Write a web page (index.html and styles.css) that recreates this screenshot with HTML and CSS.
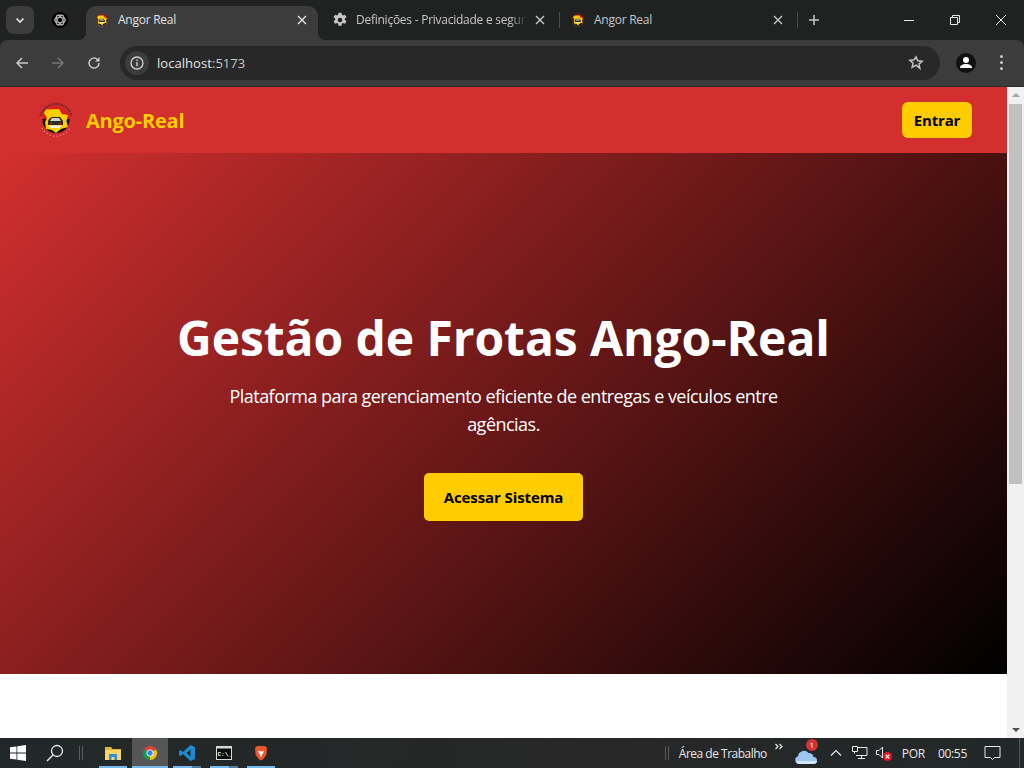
FILE: index.html
```html
<!DOCTYPE html>
<html lang="pt">
<head>
<meta charset="utf-8">
<title>Angor Real</title>
<link rel="stylesheet" href="styles.css">
</head>
<body>
<svg class="defs" width="0" height="0" aria-hidden="true">
  <defs>
    <symbol id="logo" viewBox="0 0 40 40">
      <path d="M4.500 16A16 16 0 0 1 35.500 16" fill="none" stroke="#7c2028" stroke-width="2.400" stroke-dasharray="1.600 1"/>
      <path d="M6 28A16 16 0 0 0 34 28" fill="none" stroke="#f2a8a8" stroke-width="1.200" stroke-dasharray="1 2.500"/>
      <circle cx="20" cy="20" r="13.500" fill="#e01a1a"/>
      <path d="M6.500 19h27a13.500 13.500 0 0 1-27 1z" fill="#0c0c0c"/>
      <path d="M10 9.500L23 9l3 5 6 1-1.500 6 1.500 6-7 2-5 4-4-3-6-1-1-7 2-4-3-5z" fill="#f6d000"/>
      <path d="M13 19l3-2h8l3 4v4H12v-4z" fill="#2a2a2a"/>
      <path d="M16 18h7l2 3H14z" fill="#cfcfcf"/>
      <path d="M12 25.500h14l-3 2.500h-8z" fill="#eeeeee"/>
      <circle cx="15" cy="23.500" r="1.200" fill="#b01818"/>
      <circle cx="24" cy="23.500" r="1.200" fill="#b01818"/>
    </symbol>
  </defs>
</svg>

<div class="tabstrip">
  <div class="tabsearch">
    <svg class="ico12" viewBox="0 0 12 12"><path d="M2.500 4.500L6 8l3.500-3.500" fill="none" stroke="#e3e3e3" stroke-width="1.700"/></svg>
  </div>
  <div class="pinned">
    <svg class="ico16" viewBox="0 0 16 16"><circle cx="8" cy="8" r="8" fill="#000"/><g fill="none" stroke="#bbb" stroke-width=".9"><circle cx="8" cy="8" r="5"/><ellipse cx="8" cy="8" rx="5.500" ry="2.600"/><ellipse cx="8" cy="8" rx="5.500" ry="2.600" transform="rotate(60 8 8)"/><ellipse cx="8" cy="8" rx="5.500" ry="2.600" transform="rotate(120 8 8)"/></g></svg>
  </div>
  <div class="tab tab-active">
    <svg class="ico16"><use href="#logo"/></svg>
    <span class="tabtitle">Angor Real</span>
    <svg class="tabclose" viewBox="0 0 10 10"><path d="M1 1l8 8M9 1l-8 8" stroke="#e3e3e3" stroke-width="1.400"/></svg>
  </div>
  <div class="tab tab-settings">
    <svg class="ico16" viewBox="0 0 24 24"><path fill="#c7c7c7" fill-rule="evenodd" d="M14.200 1l.6 3.300c.6.2 1.100.5 1.600.9l3.100-1.200 2.200 3.800-2.600 2.100c.1.600.1 1.200 0 1.800l2.600 2.100-2.200 3.800-3.100-1.200c-.5.400-1 .7-1.600.9l-.6 3.300H9.800l-.6-3.300c-.6-.2-1.100-.5-1.600-.9l-3.100 1.200-2.200-3.800 2.600-2.100c-.1-.6-.1-1.200 0-1.800L2.300 7.800l2.200-3.800 3.100 1.200c.5-.4 1-.7 1.600-.9L9.800 1zM12 8.500a3.500 3.500 0 1 0 0 7 3.500 3.500 0 0 0 0-7z"/></svg>
    <span class="tabtitle tabfade">Definições - Privacidade e segurança</span>
    <svg class="tabclose" viewBox="0 0 10 10"><path d="M1 1l8 8M9 1l-8 8" stroke="#c7c7c7" stroke-width="1.400"/></svg>
  </div>
  <span class="tabsep"></span>
  <div class="tab tab-third">
    <svg class="ico16"><use href="#logo"/></svg>
    <span class="tabtitle">Angor Real</span>
    <svg class="tabclose" viewBox="0 0 10 10"><path d="M1 1l8 8M9 1l-8 8" stroke="#c7c7c7" stroke-width="1.400"/></svg>
  </div>
  <span class="tabsep"></span>
  <div class="newtab">
    <svg class="ico12" viewBox="0 0 12 12"><path d="M6 1v10M1 6h10" stroke="#c7c7c7" stroke-width="1.500"/></svg>
  </div>
  <div class="winctrls">
    <div class="winbtn"><svg class="ico10" viewBox="0 0 10 10"><path d="M0 5.500h10" stroke="#e8e8e8" stroke-width="1"/></svg></div>
    <div class="winbtn"><svg class="ico10" viewBox="0 0 10 10"><path d="M.5 2.500h7v7h-7zM2.500 2.500v-2h7v7h-2" fill="none" stroke="#e8e8e8" stroke-width="1"/></svg></div>
    <div class="winbtn"><svg class="ico10" viewBox="0 0 10 10"><path d="M0 0l10 10M10 0L0 10" stroke="#e8e8e8" stroke-width="1"/></svg></div>
  </div>
</div>

<div class="toolbar">
  <div class="navbtn"><svg class="ico16" viewBox="0 0 16 16"><path d="M14 8H3M8 3L3 8l5 5" fill="none" stroke="#c7c7c7" stroke-width="1.500"/></svg></div>
  <div class="navbtn"><svg class="ico16" viewBox="0 0 16 16"><path d="M2 8h11M8 3l5 5-5 5" fill="none" stroke="#747474" stroke-width="1.500"/></svg></div>
  <div class="navbtn"><svg class="ico16" viewBox="0 0 16 16"><path d="M13 8a5 5 0 1 1-1.500-3.500L13 6" fill="none" stroke="#c7c7c7" stroke-width="1.500"/><path d="M13.500 2v4.500H9z" fill="#c7c7c7"/></svg></div>
  <div class="omnibox">
    <div class="siteinfo"><svg class="ico16" viewBox="0 0 16 16"><circle cx="8" cy="8" r="6" fill="none" stroke="#d0d0d0" stroke-width="1.300"/><path d="M8 7v4.200M8 4.600v1.300" stroke="#d0d0d0" stroke-width="1.400"/></svg></div>
    <span class="url">localhost<span class="urlport">:5173</span></span>
    <svg class="star" viewBox="0 0 16 16"><path d="M8 1.800l1.800 4 4.400.4-3.300 2.900 1 4.300L8 10.200l-3.900 2.200 1-4.300-3.300-2.900 4.400-.4z" fill="none" stroke="#c7c7c7" stroke-width="1.400"/></svg>
  </div>
  <div class="profile"><svg class="ico20" viewBox="0 0 20 20"><circle cx="10" cy="10" r="10" fill="#111"/><circle cx="10" cy="7" r="3" fill="#fff"/><path d="M4 15c0-3 3-4 6-4s6 1 6 4z" fill="#fff"/></svg></div>
  <div class="menu"><span class="dot"></span><span class="dot"></span><span class="dot"></span></div>
</div>

<div class="viewport">
  <main class="page">
    <header class="sitebar">
      <div class="brand">
        <svg class="brandlogo"><use href="#logo"/></svg>
        <span class="brandname">Ango-Real</span>
      </div>
      <button class="btn btn-nav">Entrar</button>
    </header>
    <section class="hero">
      <h1 class="hero-title">Gestão de Frotas Ango-Real</h1>
      <p class="hero-sub">Plataforma para gerenciamento eficiente de entregas e veículos entre agências.</p>
      <button class="btn btn-hero">Acessar Sistema</button>
    </section>
    <div class="blank"></div>
  </main>
  <div class="scrollbar">
    <span class="arrow-up"></span>
    <div class="thumb"></div>
    <span class="arrow-down"></span>
  </div>
</div>

<footer class="taskbar">
  <svg class="startlogo" viewBox="0 0 16 16"><path fill="#fff" d="M0 2.300l6.500-.9v6.200H0zM7.300 1.300L16 0v7.600H7.300zM0 8.400h6.500v6.200L0 13.700zM7.300 8.400H16V16l-8.700-1.200z"/></svg>
  <svg class="tasksearch" viewBox="0 0 18 18"><circle cx="11" cy="7" r="5.500" fill="none" stroke="#e8e8e8" stroke-width="1.300"/><path d="M7 11l-6 6" stroke="#e8e8e8" stroke-width="1.500"/></svg>
  <span class="grip grip-left"></span>
  <div class="apps">
    <div class="app">
      <svg class="ico16app" viewBox="0 0 16 16"><path d="M0 2h6l1.500 2H16v3H0z" fill="#e8b33c"/><path d="M0 5h16v10H0z" fill="#fbd568"/><path d="M4 15V9h8v6h-2.500v-3h-3v3z" fill="#2f8fd8"/></svg>
    </div>
    <div class="app app-active">
      <svg class="ico16app" viewBox="0 0 48 48"><path d="M5.800 13.500a21 21 0 0 1 36.400 0L24 24z" fill="#db4437"/><path d="M42.200 13.500A21 21 0 0 1 24 45L24 24z" fill="#f4c20d"/><path d="M24 45A21 21 0 0 1 5.800 13.500L24 24z" fill="#0f9d58"/><circle cx="24" cy="24" r="10.500" fill="#fff"/><circle cx="24" cy="24" r="8" fill="#3f7fea"/></svg>
    </div>
    <div class="app app-split">
      <svg class="ico16app" viewBox="0 0 16 16"><path d="M11.500 0L16 2v12l-4.500 2L4 9l-2.500 2L0 10V6l1.500-1L4 7zM11.500 4.500L7.500 8l4 3.500z" fill="#1f8ad2"/></svg>
    </div>
    <div class="app app-split">
      <svg class="ico16app" viewBox="0 0 16 16"><path d="M0 1h16v14H0z" fill="#d8d8d8"/><path d="M1 3.500h14V14H1z" fill="#0c0c0c"/><text class="cmdtext" x="1.500" y="11">C:\_</text></svg>
    </div>
    <div class="app">
      <svg class="ico16app" viewBox="0 0 16 16"><path d="M4 1h8l2 2-.7 7-3 4L8 15.500 5.700 14l-3-4L2 3z" fill="#f1562b"/><path d="M5 5.500l2 1 1-.5 1 .5 2-1-1 3-1 1v1.500l-1 .8-1-.8V9.500l-1-1z" fill="#fff"/></svg>
    </div>
  </div>
  <div class="tray">
    <span class="grip"></span>
    <span class="traylabel">Área de Trabalho</span>
    <svg class="chev2" viewBox="0 0 8 8"><path d="M.5 1l2.500 2.500L.5 6M4.500 1L7 3.500 4.500 6" fill="none" stroke="#e8e8e8" stroke-width="1.200"/></svg>
    <div class="weather">
      <svg class="cloud" viewBox="0 0 24 20"><path d="M5 19a4 4 0 0 1-1-7.800A6 6 0 0 1 14.500 8a4.500 4.500 0 0 1 5 4 3.500 3.500 0 0 1 0 7z" fill="#9cc6f0"/><path d="M2 16h21a3.500 3.500 0 0 1-3.500 3H5a4 4 0 0 1-3-3z" fill="#d5e6f7"/></svg>
      <span class="badge">1</span>
    </div>
    <svg class="trayup" viewBox="0 0 12 8"><path d="M1 6.500l5-5 5 5" fill="none" stroke="#e8e8e8" stroke-width="1.200"/></svg>
    <svg class="network" viewBox="0 0 16 16"><path d="M4 2.500h11v8H4M9.500 10.500v3M6 13.500h7" fill="none" stroke="#e8e8e8"/><path d="M.5 1.500h5v5h-5zM2.500 6.500v2" fill="#222" stroke="#e8e8e8"/></svg>
    <svg class="volume" viewBox="0 0 16 16"><path d="M.5 5.500h2.500L6.500 2v11L3 9.500H.5z" fill="none" stroke="#e8e8e8"/><circle cx="11.500" cy="11.500" r="4.500" fill="#e81123"/><path d="M9.700 9.700l3.600 3.600M13.300 9.700l-3.600 3.600" stroke="#fff" stroke-width="1.200"/></svg>
    <span class="traytext traylang">POR</span>
    <span class="traytext trayclock">00:55</span>
    <svg class="notif" viewBox="0 0 16 16"><path d="M.5 1.500h15v11H10l-2 2-2-2H.5z" fill="none" stroke="#e8e8e8"/></svg>
    <span class="showdesk"></span>
  </div>
</footer>
</body>
</html>
```

FILE: styles.css
```css
* { box-sizing: border-box; }
html, body { margin: 0; padding: 0; height: 100%; overflow: hidden; }
body {
  width: 1024px;
  height: 768px;
  display: flex;
  flex-direction: column;
  font-family: "Open Sans", "Noto Sans", "Liberation Sans", sans-serif;
  background: #202222;
}
.defs { position: absolute; }
.ico10 { width: 10px; height: 10px; display: block; }
.ico12 { width: 12px; height: 12px; display: block; }
.ico16 { width: 16px; height: 16px; display: block; flex: none; }
.ico20 { width: 20px; height: 20px; display: block; }

/* tab strip */
.tabstrip {
  height: 40px;
  flex: none;
  display: flex;
  align-items: flex-end;
  background: #202222;
  color: #c7c7c7;
  font-size: 12px;
}
.tabsearch {
  width: 28px;
  height: 28px;
  margin: 0 0 6px 6px;
  border-radius: 8px;
  background: #3c3c3c;
  display: flex;
  align-items: center;
  justify-content: center;
}
.pinned {
  width: 16px;
  height: 34px;
  margin-left: 18px;
  padding-bottom: 6px;
  display: flex;
  align-items: center;
}
.tab {
  height: 34px;
  padding-bottom: 6px;
  display: flex;
  align-items: center;
  flex: none;
}
.tabtitle { white-space: nowrap; overflow: hidden; letter-spacing: -.25px; flex: 1; margin-left: 8px; line-height: 16px; }
.tabclose { width: 10px; height: 10px; flex: none; }
.tab-active {
  width: 232px;
  margin-left: 18px;
  padding: 0 11px 6px 8px;
  background: #3c3c3c;
  border-radius: 10px 10px 0 0;
  color: #e3e3e3;
  position: relative;
}
.tab-active::before, .tab-active::after {
  content: "";
  position: absolute;
  bottom: 0;
  width: 8px;
  height: 8px;
}
.tab-active::before { left: -8px; background: radial-gradient(circle at 0 0, transparent 8px, #3c3c3c 8.5px); }
.tab-active::after { right: -8px; background: radial-gradient(circle at 100% 0, transparent 8px, #3c3c3c 8.5px); }
.tab-settings {
  width: 227px;
  margin-left: 14px;
  padding-right: 14px;
}
.tabfade {
  flex: none;
  width: 171px;
  margin-right: 8px;
  -webkit-mask-image: linear-gradient(90deg, #000 90%, transparent);
  mask-image: linear-gradient(90deg, #000 90%, transparent);
}
.tab-third {
  width: 227px;
  margin-left: 10px;
  padding-right: 14px;
}
.tabsep {
  width: 1px;
  height: 16px;
  background: #4c4c4c;
  flex: none;
  margin-bottom: 12px;
}
.newtab {
  width: 12px;
  height: 34px;
  margin-left: 10px;
  padding-bottom: 6px;
  display: flex;
  align-items: center;
  justify-content: center;
}
.winctrls {
  margin-left: auto;
  height: 40px;
  display: flex;
}
.winbtn {
  width: 46px;
  height: 40px;
  display: flex;
  align-items: center;
  justify-content: center;
}

/* toolbar */
.toolbar {
  height: 47px;
  flex: none;
  display: flex;
  align-items: center;
  background: #3c3c3c;
  border-radius: 8px 8px 0 0;
  border-bottom: 1px solid #2c2c2c;
  padding: 0 0 1px 14px;
}
.navbtn {
  width: 36px;
  height: 34px;
  display: flex;
  align-items: center;
}
.omnibox {
  width: 820px;
  height: 34px;
  margin-left: -2px;
  background: #282828;
  border-radius: 17px;
  display: flex;
  align-items: center;
  padding: 0 16px 0 5px;
}
.siteinfo {
  width: 24px;
  height: 24px;
  border-radius: 50%;
  background: #3c3c3c;
  display: flex;
  align-items: center;
  justify-content: center;
}
.url {
  margin-left: 8px;
  flex: 1;
  font-size: 13px;
  letter-spacing: .05px;
  color: #e3e3e3;
}
.urlport { color: #c7c7c7; }
.star { width: 16px; height: 16px; flex: none; }
.profile { margin-left: 16px; width: 20px; height: 20px; }
.menu {
  margin-left: 24px;
  width: 4px;
  display: flex;
  flex-direction: column;
  gap: 3px;
}
.dot { width: 3px; height: 3px; border-radius: 50%; background: #c7c7c7; display: block; }

/* page */
.viewport {
  flex: 1;
  display: flex;
  min-height: 0;
  background: #fff;
}
.page {
  flex: 1;
  display: flex;
  flex-direction: column;
  min-width: 0;
  background: #fff;
}
.sitebar {
  height: 66px;
  flex: none;
  background: #d32f2f;
  display: flex;
  align-items: center;
  justify-content: space-between;
  padding: 0 35px 0 36px;
}
.brand { display: flex; align-items: center; gap: 10px; }
.brandlogo { width: 40px; height: 40px; display: block; }
.brandname {
  font-size: 20px;
  font-weight: 700;
  color: #ffcc00;
  letter-spacing: -.22px;
}
.btn {
  border: 0;
  background: #ffcc00;
  color: #000;
  font-family: inherit;
  font-weight: 700;
  padding: 0;
}
.btn-nav {
  width: 70px;
  height: 36px;
  border-radius: 6px;
  font-size: 15px;
  letter-spacing: -.15px;
}
.hero {
  height: 521px;
  flex: none;
  background: linear-gradient(135deg, #d32f2f, #000);
  color: #fff;
  display: flex;
  flex-direction: column;
  align-items: center;
  justify-content: center;
  text-align: center;
}
.hero-title {
  margin: 0 0 12px;
  font-size: 48px;
  line-height: 64px;
  font-weight: 700;
  letter-spacing: -.08px;
}
.hero-sub {
  margin: 0 0 35px;
  width: 600px;
  font-size: 18px;
  line-height: 28px;
  letter-spacing: -.52px;
}
.btn-hero {
  width: 159px;
  height: 48px;
  border-radius: 5px;
  font-size: 15px;
  letter-spacing: -.1px;
}
.blank { flex: 1; }

/* scrollbar */
.scrollbar {
  width: 17px;
  flex: none;
  background: #f1f1f1;
  display: flex;
  flex-direction: column;
  align-items: center;
  padding: 6px 0 6px;
}
.arrow-up, .arrow-down {
  width: 0;
  height: 0;
  border-left: 4px solid transparent;
  border-right: 4px solid transparent;
  flex: none;
}
.arrow-up { border-bottom: 4px solid #a3a3a3; }
.arrow-down { border-top: 4px solid #505050; margin-top: auto; }
.thumb {
  width: 13px;
  height: 380px;
  margin-top: 7px;
  background: #c1c1c1;
}

/* taskbar */
.taskbar {
  height: 30px;
  flex: none;
  display: flex;
  align-items: center;
  background: linear-gradient(90deg, #222829, #272727 60%, #222829);
  color: #e8e8e8;
  font-size: 12px;
  position: relative;
}
.startlogo { width: 16px; height: 16px; margin-left: 10px; flex: none; }
.tasksearch { width: 18px; height: 18px; margin-left: 20px; flex: none; }
.grip {
  width: 4px;
  height: 14px;
  border-left: 1px solid #5a5a5a;
  border-right: 1px solid #5a5a5a;
  flex: none;
}
.grip-left { margin-left: 15px; }
.apps { display: flex; margin-left: 12px; gap: 1px; height: 30px; }
.app {
  width: 36px;
  height: 30px;
  display: flex;
  align-items: center;
  justify-content: center;
  position: relative;
}
.app::after {
  content: "";
  position: absolute;
  left: 4px;
  right: 4px;
  bottom: 0;
  height: 2px;
  background: #76b9ed;
}
.app-split::after { background: linear-gradient(90deg, #76b9ed 68%, #4d7ea3 68%); }
.app-active { background: #565656; }
.app-active::after { left: 0; right: 0; }
.ico16app { width: 16px; height: 16px; display: block; }
.cmdtext { font-family: "Liberation Mono", monospace; font-size: 6px; fill: #fff; font-weight: 700; }
.tray {
  margin-left: auto;
  display: flex;
  align-items: center;
  height: 30px;
}
.traylabel { margin-left: 10px; letter-spacing: -.5px; white-space: nowrap; }
.chev2 { width: 8px; height: 8px; margin: -12px 0 0 8px; flex: none; }
.weather { position: relative; width: 24px; height: 24px; margin-left: 11px; display: flex; align-items: flex-end; }
.cloud { width: 24px; height: 20px; display: block; }
.badge {
  position: absolute;
  top: -2px;
  right: 0;
  width: 12px;
  height: 12px;
  border-radius: 50%;
  background: #d13438;
  color: #fff;
  font-size: 8px;
  line-height: 12px;
  text-align: center;
}
.trayup { width: 12px; height: 8px; margin-left: 12px; flex: none; }
.network { width: 16px; height: 16px; margin-left: 10px; flex: none; }
.volume { width: 16px; height: 16px; margin-left: 8px; flex: none; }
.traytext { letter-spacing: -.3px; white-space: nowrap; }
.traylang { margin-left: 10px; }
.trayclock { margin-left: 13px; }
.notif { width: 17px; height: 16px; margin-left: 17px; flex: none; }
.showdesk { width: 1px; height: 30px; margin-left: 18px; margin-right: 4px; background: #555; flex: none; }
```
